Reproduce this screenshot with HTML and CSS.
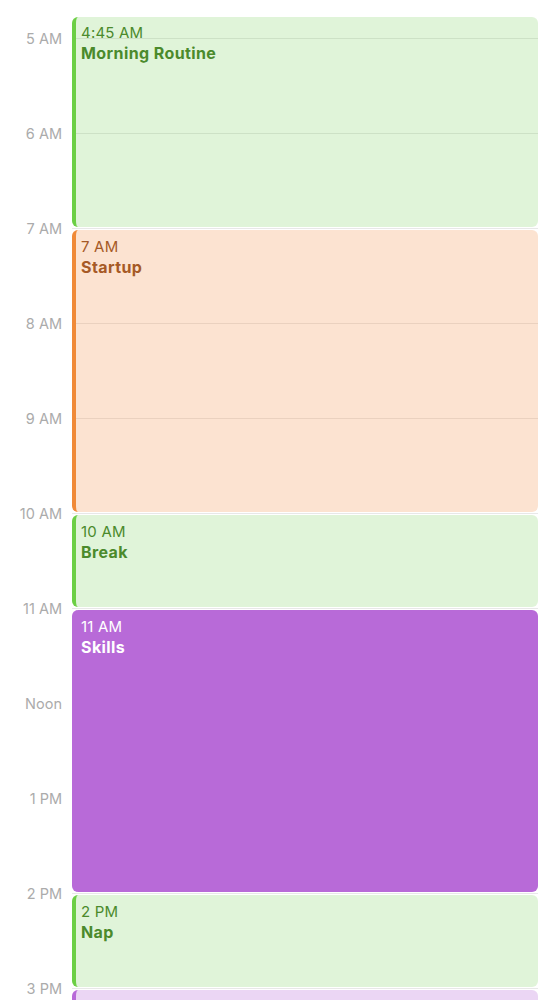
FILE: index.html
```html
<!DOCTYPE html>
<html lang="en">
<head>
    <meta charset="UTF-8">
    <meta name="viewport" content="width=device-width, initial-scale=1.0">
    <title>Day</title>
    <link rel="stylesheet" href="styles.css">
</head>
<body>
    <div class="day">
        <!-- hour grid, each row centered on its hour line, starting 4:30 -->
        <div class="hours">
            <div class="hour"><span class="label">5 AM</span><span class="rule"></span></div>
            <div class="hour"><span class="label">6 AM</span><span class="rule"></span></div>
            <div class="hour"><span class="label">7 AM</span><span class="rule"></span></div>
            <div class="hour"><span class="label">8 AM</span><span class="rule"></span></div>
            <div class="hour"><span class="label">9 AM</span><span class="rule"></span></div>
            <div class="hour"><span class="label">10 AM</span><span class="rule"></span></div>
            <div class="hour"><span class="label">11 AM</span><span class="rule"></span></div>
            <div class="hour"><span class="label">Noon</span><span class="rule"></span></div>
            <div class="hour"><span class="label">1 PM</span><span class="rule"></span></div>
            <div class="hour"><span class="label">2 PM</span><span class="rule"></span></div>
            <div class="hour"><span class="label">3 PM</span><span class="rule"></span></div>
        </div>

        <!-- events, rows are 15 minutes starting 4:45 -->
        <div class="events">
            <div class="event green" style="grid-row: 1 / 10;">
                <div class="time">4:45 AM</div>
                <div class="title">Morning Routine</div>
            </div>
            <div class="event orange" style="grid-row: 10 / 22;">
                <div class="time">7 AM</div>
                <div class="title">Startup</div>
            </div>
            <div class="event green" style="grid-row: 22 / 26;">
                <div class="time">10 AM</div>
                <div class="title">Break</div>
            </div>
            <div class="event purple" style="grid-row: 26 / 38;">
                <div class="time">11 AM</div>
                <div class="title">Skills</div>
            </div>
            <div class="event green" style="grid-row: 38 / 42;">
                <div class="time">2 PM</div>
                <div class="title">Nap</div>
            </div>
            <div class="event lilac" style="grid-row: 42 / 46;"></div>
        </div>
    </div>
</body>
</html>
```

FILE: styles.css
```css
html, body {
    margin: 0;
    background: #fff;
}
body {
    font-family: Inter, "Noto Sans", sans-serif;
}
.day {
    display: grid;
    height: 1000px;
    overflow: hidden;
    padding-top: 15px;
    box-sizing: border-box;
}
.hours, .events {
    grid-area: 1 / 1;
}
.hours {
    margin-top: -23.75px;
}
.hour {
    height: 95px;
    display: flex;
    align-items: center;
}
.label {
    width: 62px;
    padding-right: 10px;
    text-align: right;
    font-size: 14.5px;
    line-height: 16px;
    color: #ababab;
}
.rule {
    flex: 1;
    height: 1px;
    margin-right: 15px;
    background: #e8e8e8;
}
.events {
    display: grid;
    grid-template-rows: repeat(48, 23.75px);
    margin: 0 15px 0 72px;
}
.event {
    margin: 1.5px 0 1.5px;
    border-radius: 6px;
    border-left: 4px solid;
    padding: 6.5px 5px 4px;
    font-size: 15px;
    line-height: 20px;
    overflow: hidden;
}
.time {
    letter-spacing: 0.2px;
}
.title {
    font-size: 16px;
    font-weight: 700;
    letter-spacing: 0.4px;
}
.green {
    background: rgba(101, 200, 63, 0.2);
    border-color: #6ccf45;
    color: #4b8a2c;
}
.orange {
    background: rgba(240, 135, 58, 0.23);
    border-color: #f08a38;
    color: #a65a26;
}
.purple {
    background: #b86ad8;
    border-color: #b86ad8;
    color: #fff;
}
.lilac {
    background: rgba(184, 106, 216, 0.28);
    border-color: #b86ad8;
}
```
